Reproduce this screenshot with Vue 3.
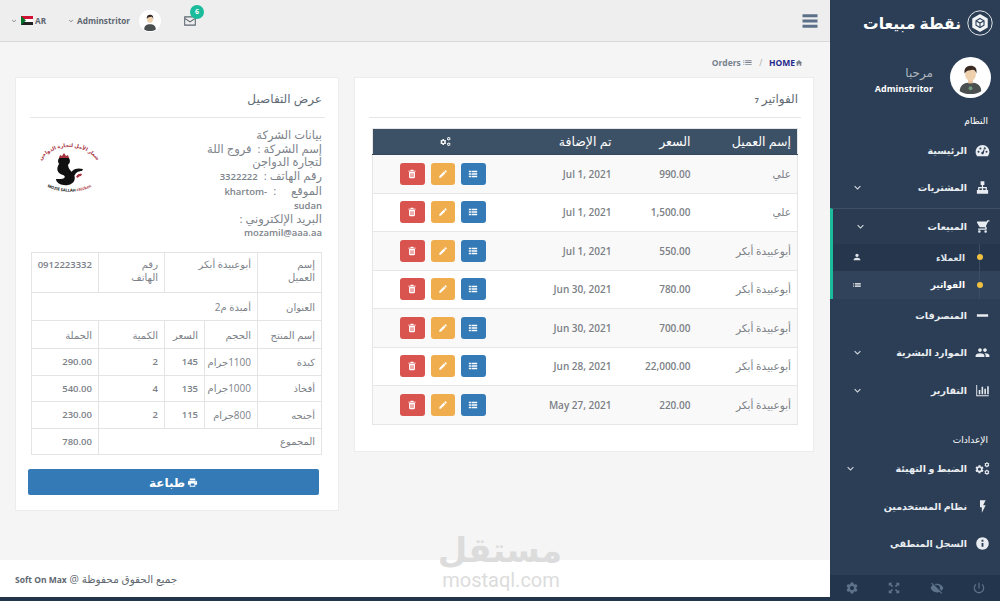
<template>
  <div class="layout" dir="rtl">
    <!-- sidebar -->
    <aside class="sidebar">
      <div class="brand">
        <svg class="brand-logo" viewBox="0 0 26 26">
          <circle cx="13" cy="13" r="12.2" fill="none" stroke="#dfe5ea" stroke-width="1"/>
          <path d="M13 5l7 4v8l-7 4-7-4V9z" fill="#f2f4f6" stroke="#f2f4f6" stroke-width="1.500" stroke-linejoin="round"/>
          <path d="M13 8.500l4 2.300v4.400l-4 2.300-4-2.300v-4.400z" fill="none" stroke="#2b3e55" stroke-width="1.100"/>
          <path d="M9 10.800l4 2.200 4-2.200M13 13v4.500" fill="none" stroke="#2b3e55" stroke-width="1.100"/>
        </svg>
        <span>نقطة مبيعات</span>
      </div>

      <div class="profile">
        <svg class="profile-avatar" viewBox="0 0 42 42">
          <circle cx="21" cy="21" r="21" fill="#fff"/>
          <path d="M10 35c0-6 4-9 11-9s11 3 11 9c-3 2-7 3-11 3s-8-1-11-3z" fill="#4a4f50"/>
          <circle cx="21" cy="32" r="2" fill="#6f9a7d"/>
          <rect x="18.5" y="23" width="5" height="4" fill="#e6c29c"/>
          <ellipse cx="21" cy="18" rx="5.5" ry="6.5" fill="#efd0ac"/>
          <path d="M15 17c-1-5 2-8 6-8s7 2 6 8c-1-3-2-4-4-4-3 1-6 0-8 4z" fill="#3a2a22"/>
        </svg>
        <div class="profile-text">
          <div class="welcome">مرحبا</div>
          <div class="profile-name">Adminstritor</div>
        </div>
      </div>

      <div class="menu-title first">النظام</div>
      <div v-for="item in menuTop" :key="item.label" class="menu-item">
        <Icon :name="item.icon" class="menu-icon" />
        <span class="menu-label">{{ item.label }}</span>
        <Icon v-if="item.more" name="chevron" class="menu-chevron" />
      </div>

      <div class="menu-group">
        <div class="menu-item">
          <Icon name="cart" class="menu-icon flip" />
          <span class="menu-label">المبيعات</span>
          <Icon name="chevron" class="menu-chevron" />
        </div>
        <div class="submenu">
          <div class="sub-item">
            <span class="sub-dot"></span>
            <span class="sub-label">العملاء</span>
            <Icon name="person" class="sub-icon" />
          </div>
          <div class="sub-item selected">
            <span class="sub-dot"></span>
            <span class="sub-label">الفواتير</span>
            <Icon name="list" class="sub-icon" />
          </div>
        </div>
      </div>

      <div class="menu-mid">
        <div v-for="item in menuMid" :key="item.label" class="menu-item">
          <Icon :name="item.icon" class="menu-icon" />
          <span class="menu-label">{{ item.label }}</span>
          <Icon v-if="item.more" name="chevron" class="menu-chevron" />
        </div>
      </div>

      <div class="menu-title second">الإعدادات</div>
      <div v-for="item in menuBottom" :key="item.label" class="menu-item">
        <Icon :name="item.icon" class="menu-icon" />
        <span class="menu-label">{{ item.label }}</span>
        <Icon v-if="item.more" name="chevron" class="menu-chevron far" />
      </div>

      <div class="side-footer">
        <Icon name="power" />
        <Icon name="eyeOff" />
        <Icon name="expand" />
        <Icon name="gear" />
      </div>
    </aside>

    <div class="main">
      <header class="topbar">
        <Icon name="bars" class="bars" />
        <div class="top-left">
          <div class="mail">
            <Icon name="mail" class="mail-icon" />
            <span class="badge">6</span>
          </div>
          <svg class="top-avatar" viewBox="0 0 42 42">
            <circle cx="21" cy="21" r="21" fill="#fff"/>
            <path d="M10 37c0-7 4-10 11-10s11 3 11 10c-3 2-7 3-11 3s-8-1-11-3z" fill="#4a4f50"/>
            <ellipse cx="21" cy="18" rx="5.5" ry="6.5" fill="#efd0ac"/>
            <path d="M15 17c-1-5 2-8 6-8s7 2 6 8c-1-3-2-4-4-4-3 1-6 0-8 4z" fill="#2e2420"/>
          </svg>
          <span class="top-user">Adminstritor</span>
          <Icon name="chevron" class="top-chevron" />
          <span class="top-lang">AR</span>
          <svg class="flag" viewBox="0 0 12 9">
            <rect width="12" height="3" fill="#d21034"/>
            <rect y="3" width="12" height="3" fill="#fff"/>
            <rect y="6" width="12" height="3" fill="#222"/>
            <path d="M0 0 5 4.5 0 9z" fill="#007229"/>
          </svg>
          <Icon name="chevron" class="top-chevron" />
        </div>
      </header>

      <main class="content">
        <div class="breadcrumb">
          <Icon name="home" class="crumb-home" />
          <span class="crumb-home-text">HOME</span>
          <span class="crumb-sep">/</span>
          <Icon name="list" class="crumb-list" />
          <span class="crumb-text">Orders</span>
        </div>

        <div class="cards">
          <section class="card invoices">
            <h3 class="card-title">الفواتير <small>7</small></h3>
            <table class="orders">
              <thead>
                <tr>
                  <th class="c-name">إسم العميل</th>
                  <th class="c-price">السعر</th>
                  <th class="c-date">تم الإضافة</th>
                  <th class="c-actions"><Icon name="cogs" class="th-cogs" /></th>
                </tr>
              </thead>
              <tbody>
                <tr v-for="(o, i) in orders" :key="i">
                  <td>{{ o.name }}</td>
                  <td class="num">{{ o.price }}</td>
                  <td class="num">{{ o.date }}</td>
                  <td class="c-actions">
                    <div class="actions">
                      <button class="act blue"><Icon name="thList" /></button>
                      <button class="act orange"><Icon name="pencil" /></button>
                      <button class="act red"><Icon name="trash" /></button>
                    </div>
                  </td>
                </tr>
              </tbody>
            </table>
          </section>

          <section class="card details">
            <h3 class="card-title">عرض التفاصيل</h3>
            <div class="company">
              <div class="company-text">
                <div>بيانات الشركة</div>
                <div>إسم الشركة : &nbsp;فروج اللة</div>
                <div>لتجارة الدواجن</div>
                <div>رقم الهاتف : &nbsp;<span class="lat">3322222</span></div>
                <div>الموقع &nbsp; &nbsp; : &nbsp;<span class="lat">-khartom</span></div>
                <div class="lat">sudan</div>
                <div>البريد الإلكتروني :</div>
                <div class="lat">mozamil@aaa.aa</div>
              </div>
              <svg class="company-logo" viewBox="0 0 74 62">
                <defs>
                  <path id="arcTop" d="M6 32A31 24 0 0 1 68 32"/>
                  <path id="arcBottom" d="M5 37A33 19 0 0 0 70 37"/>
                </defs>
                <text class="logo-text" font-size="5" font-weight="700" text-anchor="middle" fill="#a8323e">
                  <textPath href="#arcTop" startOffset="50%">شعار الأمل لتجارة الدواجن</textPath>
                </text>
                <text class="logo-text" font-size="4" font-weight="700" text-anchor="middle" fill="#111">
                  <textPath href="#arcBottom" startOffset="50%">MOZIE SALLAH <tspan fill="#a8323e">chicken</tspan></textPath>
                </text>
                <ellipse cx="32" cy="22" rx="6" ry="5" fill="#111"/>
                <path d="M27 25C24 30 25 34 31 36c3 1 2 4-2 4h-5c0 4 6 7 12 6 6-1 8-6 6-10-2-4-6-5-6-11z" fill="#111"/>
                <path d="M27 19l1-3 2 1 2-3 2 3 2-1 1 3z" fill="#a8323e"/>
                <path d="M38 38C38 31 44 28 51 30l-1 2c-4 0-7 2-8 6z" fill="#111"/>
                <path d="M44 38c1-3 4-4 6-3l-1 2c-2 0-3 1-3 2z" fill="#a8323e"/>
              </svg>
            </div>

            <table class="bill">
              <colgroup>
                <col class="b1" /><col class="b2" /><col class="b3" /><col class="b4" /><col class="b5" />
              </colgroup>
              <tbody>
                <tr class="tall">
                  <td>إسم<br />العميل</td>
                  <td colspan="2">أبوعبيدة أبكر</td>
                  <td>رقم<br />الهاتف</td>
                  <td class="lead">0912223332</td>
                </tr>
                <tr class="mid">
                  <td>العنوان</td>
                  <td colspan="4">أمبدة م2</td>
                </tr>
                <tr class="mid">
                  <td>إسم المنتج</td><td>الحجم</td><td>السعر</td><td>الكمية</td><td>الجملة</td>
                </tr>
                <tr v-for="row in billRows" :key="row.item">
                  <td>{{ row.item }}</td>
                  <td>{{ row.size }}</td>
                  <td class="lead">{{ row.price }}</td>
                  <td class="lead">{{ row.qty }}</td>
                  <td class="lead">{{ row.total }}</td>
                </tr>
                <tr>
                  <td colspan="4">المجموع</td>
                  <td class="lead">780.00</td>
                </tr>
              </tbody>
            </table>

            <button class="print">
              <Icon name="print" class="print-icon" />
              <span>طباعة</span>
            </button>
          </section>
        </div>
      </main>

      <footer class="footer">
        <span>جميع الحقوق محفوظة @ <b>Soft On Max</b></span>
      </footer>
      <div class="strip"></div>

      <div class="watermark">
        <div class="wm-ar">مستقل</div>
        <div class="wm-en">mostaql.com</div>
      </div>
    </div>
  </div>
</template>

<script setup>
import { h } from 'vue'

const gear = 'M19.14 12.94c.04-.3.06-.61.06-.94 0-.32-.02-.64-.07-.94l2.03-1.58c.18-.14.23-.41.12-.61l-1.92-3.32c-.12-.22-.37-.29-.59-.22l-2.39.96c-.5-.38-1.03-.7-1.62-.94l-.36-2.54c-.04-.24-.24-.41-.48-.41h-3.84c-.24 0-.43.17-.47.41l-.36 2.54c-.59.24-1.13.57-1.62.94l-2.39-.96c-.22-.08-.47 0-.59.22L2.74 8.87c-.12.21-.08.47.12.61l2.03 1.58c-.05.3-.09.63-.09.94s.02.64.07.94l-2.03 1.58c-.18.14-.23.41-.12.61l1.92 3.32c.12.22.37.29.59.22l2.39-.96c.5.38 1.03.7 1.62.94l.36 2.54c.05.24.24.41.48.41h3.84c.24 0 .44-.17.47-.41l.36-2.54c.59-.24 1.13-.56 1.62-.94l2.39.96c.22.08.47 0 .59-.22l1.92-3.32c.12-.22.07-.47-.12-.61l-2.01-1.58zM12 15.6c-1.98 0-3.6-1.62-3.6-3.6s1.62-3.6 3.6-3.6 3.6 1.62 3.6 3.6-1.62 3.6-3.6 3.6z'

const icons = {
  gear,
  chevron: 'M7.41 8.59 12 13.17l4.59-4.58L18 10l-6 6-6-6z',
  dashboard: 'M12 3C6 3 1 8 1 14c0 2.5.8 4.8 2.2 6.6l.4.4h16.8l.4-.4C22.2 18.8 23 16.5 23 14c0-6-5-11-11-11zM4 14a1.6 1.6 0 1 0 3.2 0A1.6 1.6 0 1 0 4 14zM7 8.6a1.6 1.6 0 1 0 3.2 0 1.6 1.6 0 1 0-3.2 0zM16.8 14a1.6 1.6 0 1 0 3.2 0 1.6 1.6 0 1 0-3.2 0zM14 8.6a1.6 1.6 0 1 0 3.2 0 1.6 1.6 0 1 0-3.2 0zM10 16a2 2 0 0 0 4 .4l1.5-7-1-.3-2.4 5c-1.2 0-2 .8-2.100 1.900z',
  sitemap: 'M9 2h6v6h-2v3h6v5h2v6h-6v-6h2v-3h-4v3h2v6H9v-6h2v-3H7v3h2v6H3v-6h2v-5h6V8H9z',
  cart: 'M7 18c-1.1 0-1.99.9-1.99 2S5.9 22 7 22s2-.9 2-2-.9-2-2-2zM1 2v2h2l3.6 7.59-1.35 2.45c-.16.28-.25.61-.25.96 0 1.1.9 2 2 2h12v-2H7.42c-.14 0-.25-.11-.25-.25l.03-.12.9-1.63h7.45c.75 0 1.41-.41 1.75-1.03l3.58-6.49c.08-.14.12-.31.12-.48 0-.55-.45-1-1-1H5.21l-.94-2H1zm16 16c-1.1 0-1.99.9-1.99 2s.89 2 1.99 2 2-.9 2-2-.9-2-2-2z',
  minus: 'M3 10h18v4H3z',
  users: 'M16 11c1.66 0 2.99-1.34 2.99-3S17.66 5 16 5c-1.66 0-3 1.34-3 3s1.34 3 3 3zm-8 0c1.66 0 2.99-1.34 2.99-3S9.66 5 8 5C6.34 5 5 6.34 5 8s1.34 3 3 3zm0 2c-2.33 0-7 1.17-7 3.5V19h14v-2.5c0-2.33-4.67-3.5-7-3.5zm8 0c-.29 0-.62.02-.97.05 1.16.84 1.97 1.97 1.97 3.45V19h6v-2.5c0-2.33-4.67-3.5-7-3.5z',
  chart: 'M2 3h1.500v16.500H22V21H2zM6 11h2.500v7H6zM10.500 6H13v12h-2.500zM15 9h2.500v9H15zM19.500 5H22v13h-2.500z',
  bolt: 'M8 2v11h3v9l6-12h-4l4-8z',
  info: 'M12 2C6.48 2 2 6.48 2 12s4.48 10 10 10 10-4.48 10-10S17.52 2 12 2zm1.500 15h-3v-6h3v6zm0-8h-3V6h3v3z',
  person: 'M12 12c2.21 0 4-1.79 4-4s-1.79-4-4-4-4 1.79-4 4 1.79 4 4 4zm0 2c-2.67 0-8 1.34-8 4v2h16v-2c0-2.66-5.33-4-8-4z',
  list: 'M3 13h2v-2H3v2zm0 4h2v-2H3v2zm0-8h2V7H3v2zm4 4h14v-2H7v2zm0 4h14v-2H7v2zM7 7v2h14V7H7z',
  thList: 'M2 4h5v4H2zM8.500 4H22v4H8.500zM2 10h5v4H2zM8.500 10H22v4H8.500zM2 16h5v4H2zM8.500 16H22v4H8.500z',
  pencil: 'M3 17.25V21h3.750L17.810 9.940l-3.750-3.750L3 17.250zM20.710 7.040c.39-.39.39-1.020 0-1.410l-2.340-2.340c-.39-.39-1.020-.39-1.410 0l-1.830 1.830 3.750 3.750 1.830-1.830z',
  trash: 'M5 7h14v13c0 1.100-.9 2-2 2H7c-1.100 0-2-.9-2-2zM8.500 10v9h1.500v-9zM11.250 10v9h1.500v-9zM14 10v9h1.500v-9zM3 4h5l1-2h6l1 2h5v2H3z',
  print: 'M19 8H5c-1.660 0-3 1.340-3 3v6h4v4h12v-4h4v-6c0-1.660-1.340-3-3-3zm-3 11H8v-5h8v5zm3-7c-.55 0-1-.45-1-1s.45-1 1-1 1 .45 1 1-.45 1-1 1zm-1-9H6v4h12V3z',
  home: 'M10 20v-6h4v6h5v-8h3L12 3 2 12h3v8z',
  mail: 'M2 4h20v16H2zM3.800 9v9.200h16.400V9L12 14.500zM3.800 5.800v1L12 12.300l8.200-5.500v-1z',
  bars: 'M3 4h18v3.500H3zM3 10.250h18v3.500H3zM3 16.500h18V20H3z',
  power: 'M13 3h-2v10h2V3zm4.830 2.170l-1.420 1.420C17.990 7.860 19 9.810 19 12c0 3.870-3.130 7-7 7s-7-3.130-7-7c0-2.190 1.010-4.140 2.580-5.420L6.170 5.170C4.230 6.820 3 9.260 3 12c0 4.970 4.030 9 9 9s9-4.030 9-9c0-2.740-1.230-5.180-3.170-6.830z',
  eyeOff: 'M12 7c2.760 0 5 2.240 5 5 0 .65-.13 1.260-.36 1.830l2.920 2.920c1.510-1.260 2.700-2.890 3.430-4.750-1.730-4.390-6-7.500-11-7.500-1.400 0-2.740.25-3.980.7l2.160 2.160C10.740 7.130 11.350 7 12 7zM2 4.270l2.280 2.280.46.46C3.080 8.300 1.780 10.020 1 12c1.730 4.390 6 7.500 11 7.500 1.550 0 3.030-.3 4.380-.84l.42.42L19.730 22 21 20.730 3.270 3 2 4.270z',
  expand: 'M3 3h6L7 5l3.500 3.500-2 2L5 7 3 9zM21 3v6l-2-2-3.500 3.500-2-2L17 5l-2-2zM3 21v-6l2 2 3.500-3.500 2 2L7 19l2 2zM21 21h-6l2-2-3.500-3.500 2-2L19 17l2-2z'
}

// small inline icon helper, cogs is built from gears
const Icon = (props) => {
  if (props.name === 'cogs') {
    return h('svg', { viewBox: '0 0 24 24', fill: 'currentColor' }, [
      h('path', { d: gear, transform: 'translate(-1 5) scale(.68)' }),
      h('path', { d: gear, transform: 'translate(14 1) scale(.42)' }),
      h('path', { d: gear, transform: 'translate(14 13) scale(.42)' })
    ])
  }
  return h('svg', { viewBox: '0 0 24 24', fill: 'currentColor' }, [
    h('path', { d: icons[props.name], 'fill-rule': 'evenodd' })
  ])
}

const menuTop = [
  { label: 'الرئيسية', icon: 'dashboard' },
  { label: 'المشتريات', icon: 'sitemap', more: true }
]

const menuMid = [
  { label: 'المنصرفات', icon: 'minus' },
  { label: 'الموارد البشرية', icon: 'users', more: true },
  { label: 'التقارير', icon: 'chart', more: true }
]

const menuBottom = [
  { label: 'الضبط و التهيئة', icon: 'cogs', more: true },
  { label: 'نظام المستخدمين', icon: 'bolt' },
  { label: 'السجل المنطقي', icon: 'info' }
]

const orders = [
  { name: 'علي', price: '990.00', date: 'Jul 1, 2021' },
  { name: 'علي', price: '1,500.00', date: 'Jul 1, 2021' },
  { name: 'أبوعبيدة أبكر', price: '550.00', date: 'Jul 1, 2021' },
  { name: 'أبوعبيدة أبكر', price: '780.00', date: 'Jun 30, 2021' },
  { name: 'أبوعبيدة أبكر', price: '700.00', date: 'Jun 30, 2021' },
  { name: 'أبوعبيدة أبكر', price: '22,000.00', date: 'Jun 28, 2021' },
  { name: 'أبوعبيدة أبكر', price: '220.00', date: 'May 27, 2021' }
]

const billRows = [
  { item: 'كبدة', size: '1100جرام', price: '145', qty: '2', total: '290.00' },
  { item: 'أفخاذ', size: '1000جرام', price: '135', qty: '4', total: '540.00' },
  { item: 'أجنحه', size: '800جرام', price: '115', qty: '2', total: '230.00' }
]
</script>

<style>
html, body {
  margin: 0;
  height: 100%;
  overflow: hidden;
}
</style>

<style scoped>
.layout {
  display: flex;
  width: 1000px;
  height: 601px;
  overflow: hidden;
  font-family: "Open Sans", "DejaVu Sans", sans-serif;
  font-size: 10px;
  color: #777;
  background: #f5f5f5;
}

/* sidebar */
.sidebar {
  width: 170px;
  flex-shrink: 0;
  display: flex;
  flex-direction: column;
  position: relative;
  background: #2c3e55;
  color: #eef1f4;
}

.brand {
  height: 46px;
  display: flex;
  align-items: center;
  gap: 6px;
  padding-right: 7px;
  color: #fff;
  font-size: 15.500px;
  font-weight: 700;
}

.brand-logo {
  width: 26px;
  height: 26px;
}

.profile {
  height: 62px;
  display: flex;
  align-items: center;
  gap: 17px;
  padding-right: 9px;
}

.profile-avatar {
  width: 41px;
  height: 41px;
}

.profile-text {
  margin-top: 8px;
}

.welcome {
  font-size: 12px;
  color: #aeb6bf;
  line-height: 16px;
}

.profile-name {
  font-size: 9px;
  font-weight: 700;
  color: #fff;
  line-height: 16px;
}

.menu-title {
  font-size: 9px;
  color: #fff;
  padding-right: 12px;
  line-height: 14px;
}

.menu-title.first {
  margin-top: 6px;
  margin-bottom: 3.500px;
}

.menu-title.second {
  margin-top: 24px;
  margin-bottom: 3px;
}

.menu-item {
  height: 37.500px;
  flex-shrink: 0;
  display: flex;
  align-items: center;
  font-size: 9.500px;
  font-weight: 700;
  color: #e9edf1;
}

.menu-icon {
  width: 15px;
  height: 15px;
  margin-right: 10px;
  margin-left: 8px;
  flex-shrink: 0;
}

.menu-label {
  flex: 1;
}

.menu-chevron {
  width: 13px;
  height: 13px;
  margin-left: 21px;
  color: #d5dbe1;
}

.menu-chevron.far {
  margin-left: 14px;
}

.flip {
  transform: scaleX(-1);
}

.menu-group {
  border-top: 1px solid #3d5068;
  border-left: 3px solid #1abc9c;
  background: #2a3b52;
  margin-top: 1px;
}

.menu-group .menu-item {
  height: 35px;
}

.menu-mid {
  margin-top: -2px;
}

.submenu {
  background: #26374d;
}

.sub-item {
  height: 27.500px;
  display: flex;
  align-items: center;
  font-size: 9px;
  font-weight: 700;
  color: #dfe4e9;
  position: relative;
}

/* vertical guide behind the dots */
.sub-item::before {
  content: "";
  position: absolute;
  top: 0;
  bottom: 0;
  right: 20px;
  width: 1px;
  background: #3a4d64;
}

.sub-item.selected {
  background: #30435b;
  color: #fff;
}

.sub-dot {
  width: 6px;
  height: 6px;
  border-radius: 50%;
  background: #f0c040;
  margin-right: 17px;
  margin-left: 12px;
  flex-shrink: 0;
  position: relative;
}

.sub-label {
  flex: 1;
}

.sub-icon {
  width: 10px;
  height: 10px;
  margin-left: 19px;
}

.side-footer {
  position: absolute;
  left: 0;
  right: 0;
  bottom: 0;
  height: 26px;
  display: flex;
  align-items: center;
  justify-content: space-between;
  padding: 0 14px 0 15px;
  background: #22354c;
  color: #5e738a;
}

.side-footer svg {
  width: 14px;
  height: 14px;
}

/* main column */
.main {
  flex: 1;
  min-width: 0;
  display: flex;
  flex-direction: column;
  position: relative;
}

.topbar {
  height: 42px;
  box-sizing: border-box;
  flex-shrink: 0;
  display: flex;
  align-items: center;
  justify-content: space-between;
  padding: 0 10px 0 10px;
  background: #eee;
  border-bottom: 1px solid #d9d9d9;
}

.bars {
  width: 20px;
  height: 20px;
  color: #5c7189;
}

.top-left {
  display: flex;
  align-items: center;
  font-size: 8.200px;
  font-weight: 700;
  color: #5d6670;
}

.mail {
  position: relative;
  width: 14px;
  height: 14px;
  margin-left: 22px;
  margin-top: 1px;
}

.mail-icon {
  width: 14px;
  height: 14px;
  color: #5d6670;
}

.badge {
  position: absolute;
  top: -9px;
  left: 7px;
  width: 14px;
  height: 14px;
  line-height: 14px;
  text-align: center;
  border-radius: 50%;
  background: #1abc9c;
  color: #fff;
  font-size: 7px;
}

.top-avatar {
  width: 22px;
  height: 22px;
  margin-left: 9px;
}

.top-user {
  margin-left: 2px;
}

.top-chevron {
  width: 8px;
  height: 8px;
  color: #6f7780;
}

.top-lang {
  margin-right: 21px;
  margin-left: 2px;
}

.flag {
  width: 12px;
  height: 9px;
  margin-left: 3px;
}

/* content */
.content {
  flex: 1;
  min-height: 0;
  padding: 0 16px 0 15px;
}

.breadcrumb {
  height: 35px;
  display: flex;
  align-items: center;
  padding-right: 11px;
  font-size: 8.500px;
  font-weight: 700;
  color: #77828e;
  margin-top: 3px;
  margin-bottom: -3px;
}

.crumb-home {
  width: 8px;
  height: 8px;
}

.crumb-home-text {
  color: #1f2a8c;
}

.crumb-sep {
  margin: 0 6.500px;
  color: #aaa;
  font-weight: 400;
}

.crumb-list {
  width: 11px;
  height: 11px;
  margin-left: 1px;
}

.cards {
  display: flex;
  gap: 15px;
  align-items: flex-start;
}

.card {
  background: #fff;
  border: 1px solid #ececec;
  box-sizing: border-box;
}

.invoices {
  width: 460px;
  height: 375px;
  padding: 0 15px;
}

.details {
  width: 324px;
  height: 434px;
  padding: 0 16px 0 15px;
}

.card-title {
  margin: 0 -3px 0 -1px;
  height: 39px;
  line-height: 41px;
  padding-right: 3px;
  font-size: 12px;
  font-weight: 400;
  color: #616b75;
  border-bottom: 1px solid #e6e6e6;
}

.card-title small {
  font-size: 7px;
  font-weight: 700;
}

/* invoices table */
.orders {
  width: 426px;
  margin: 10px 0 0 0;
  border-collapse: collapse;
  table-layout: fixed;
  border: 1px solid #e6e6e6;
}

.orders th {
  height: 26px;
  box-sizing: border-box;
  padding: 0 6px;
  background: #3d5166;
  color: #fff;
  font-size: 12.500px;
  font-weight: 400;
  text-align: right;
  border-bottom: 1px solid #33465a;
}

.c-name { width: 101px; }
.c-price { width: 79px; }
.c-date { width: 100px; }

.orders th.c-actions {
  text-align: center;
}

.th-cogs {
  width: 11px;
  height: 11px;
  display: block;
  margin: auto;
}

.orders td {
  height: 38.500px;
  box-sizing: border-box;
  padding: 0 6px;
  text-align: right;
  font-size: 10.500px;
  color: #7b7f86;
  border-top: 1px solid #e6e6e6;
  background: #fff;
}

.orders tbody tr:nth-child(odd) td {
  background: #f9f9f9;
}

.orders td.num {
  direction: ltr;
  text-align: right;
  font-size: 10px;
  font-weight: 600;
}

.actions {
  display: flex;
  gap: 6px;
  justify-content: center;
  padding-right: 5px;
}

.act {
  width: 24.500px;
  height: 22px;
  padding: 0;
  border: 0;
  border-radius: 3px;
  display: flex;
  align-items: center;
  justify-content: center;
  color: #fff;
}

.act svg {
  width: 10px;
  height: 10px;
}

.blue { background: #337ab7; }
.orange { background: #f0ad4e; }
.red { background: #d9534f; }

/* company block */
.company {
  display: flex;
  justify-content: space-between;
  align-items: flex-start;
  padding-top: 10px;
  height: 125px;
  box-sizing: border-box;
}

.company-text {
  font-size: 11.500px;
  line-height: 13.700px;
  color: #7d838a;
  text-align: right;
}

.lat {
  font-size: 9.500px;
  font-weight: 600;
}

.company-logo {
  width: 74px;
  height: 62px;
  margin-left: 1px;
  margin-top: 11px;
}

.logo-text {
  direction: ltr;
  font-family: "Open Sans", "DejaVu Sans", sans-serif;
}

/* bill table */
.bill {
  width: 290px;
  margin: 9px 0 0 0;
  border-collapse: collapse;
  table-layout: fixed;
  font-size: 10px;
}

.b1 { width: 64px; }
.b2 { width: 53px; }
.b3 { width: 40px; }
.b4 { width: 66px; }
.b5 { width: 67px; }

.bill td {
  height: 26.500px;
  box-sizing: border-box;
  padding: 0 6px;
  border: 1px solid #e4e4e4;
  color: #7c8188;
  text-align: right;
}

.bill tr.mid td {
  height: 28px;
}

.bill tr.tall td {
  height: 40px;
  vertical-align: top;
  padding-top: 5px;
  line-height: 13px;
}

.bill td.lead {
  font-size: 9.500px;
  font-weight: 600;
}

.print {
  display: flex;
  align-items: center;
  justify-content: center;
  gap: 2px;
  width: 291px;
  height: 26px;
  margin: 14px 3px 0 0;
  padding: 0;
  border: 0;
  border-radius: 2px;
  background: #337ab7;
  color: #fff;
  font-family: inherit;
  font-size: 12px;
  font-weight: 700;
}

.print-icon {
  width: 11px;
  height: 11px;
}

.footer {
  height: 37px;
  flex-shrink: 0;
  display: flex;
  align-items: center;
  justify-content: flex-end;
  padding-left: 15px;
  background: #fff;
  font-size: 10.500px;
  color: #5f6871;
}

.footer b {
  font-size: 8.500px;
}

.strip {
  height: 4px;
  flex-shrink: 0;
  background: #22354c;
}

.watermark {
  position: absolute;
  left: 440px;
  top: 528px;
  width: 122px;
  text-align: center;
  color: #dcdcdc;
  pointer-events: none;
}

.wm-ar {
  font-size: 34px;
  font-weight: 700;
  line-height: 42px;
}

.wm-en {
  font-family: Roboto, sans-serif;
  font-size: 20px;
  line-height: 20px;
  direction: ltr;
}
</style>
